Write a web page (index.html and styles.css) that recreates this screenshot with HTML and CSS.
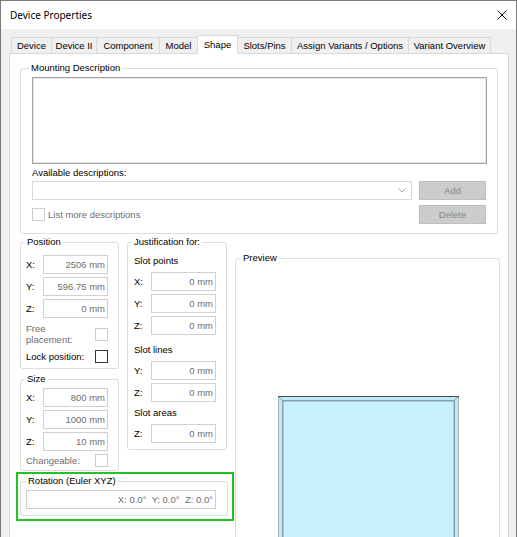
FILE: index.html
```html
<!DOCTYPE html>
<html>
<head>
<meta charset="utf-8">
<title>Device Properties</title>
<link rel="stylesheet" href="styles.css">
</head>
<body>
<div class="window">
  <div class="titlebar">
    <span class="title">Device Properties</span>
    <svg class="close" width="10" height="10" viewBox="0 0 10 10"><path d="M0.5 0.5 L9.5 9.5 M9.5 0.5 L0.5 9.5" stroke="#111" stroke-width="1" fill="none"/></svg>
  </div>
  <div class="client">
    <div class="tabs">
      <div class="tab">Device</div>
      <div class="tab">Device II</div>
      <div class="tab">Component</div>
      <div class="tab">Model</div>
      <div class="tab selected">Shape</div>
      <div class="tab">Slots/Pins</div>
      <div class="tab">Assign Variants / Options</div>
      <div class="tab">Variant Overview</div>
    </div>
    <div class="page">
      <div class="group mounting">
        <div class="group-title">Mounting Description</div>
        <div class="textarea"></div>
        <div class="field-label">Available descriptions:</div>
        <div class="desc-grid">
          <div class="combo"><svg width="8" height="5" viewBox="0 0 8 5"><path d="M0.5 0.5 L4 4 L7.5 0.5" stroke="#a6a6a6" fill="none"/></svg></div>
          <div class="button">Add</div>
          <div class="check-row"><span class="checkbox"></span><span class="muted">List more descriptions</span></div>
          <div class="button">Delete</div>
        </div>
      </div>

      <div class="lower">
        <div class="lower-left">
          <div class="cols">
            <div class="col">
              <div class="group position">
                <div class="group-title">Position</div>
                <div class="rows first">
                  <div class="field-row"><span>X:</span><span class="input">2506 mm</span></div>
                  <div class="field-row"><span>Y:</span><span class="input">596.75 mm</span></div>
                  <div class="field-row"><span>Z:</span><span class="input">0 mm</span></div>
                </div>
                <div class="check-line free"><span class="muted wrap-label">Free placement:</span><span class="checkbox"></span></div>
                <div class="check-line lock"><span>Lock position:</span><span class="checkbox enabled"></span></div>
              </div>
              <div class="group size">
                <div class="group-title">Size</div>
                <div class="rows">
                  <div class="field-row"><span>X:</span><span class="input">800 mm</span></div>
                  <div class="field-row"><span>Y:</span><span class="input">1000 mm</span></div>
                  <div class="field-row"><span>Z:</span><span class="input">10 mm</span></div>
                </div>
                <div class="check-line change"><span class="muted">Changeable:</span><span class="checkbox"></span></div>
              </div>
            </div>
            <div class="group justification">
              <div class="group-title">Justification for:</div>
              <div class="sub-head points">Slot points</div>
              <div class="rows">
                <div class="field-row"><span>X:</span><span class="input">0 mm</span></div>
                <div class="field-row"><span>Y:</span><span class="input">0 mm</span></div>
                <div class="field-row"><span>Z:</span><span class="input">0 mm</span></div>
              </div>
              <div class="sub-head lines">Slot lines</div>
              <div class="rows">
                <div class="field-row"><span>Y:</span><span class="input">0 mm</span></div>
                <div class="field-row"><span>Z:</span><span class="input">0 mm</span></div>
              </div>
              <div class="sub-head areas">Slot areas</div>
              <div class="rows">
                <div class="field-row"><span>Z:</span><span class="input">0 mm</span></div>
              </div>
            </div>
          </div>
          <div class="highlight">
            <div class="group rotation">
              <div class="group-title">Rotation (Euler XYZ)</div>
              <div class="input wide">X: 0.0°  Y: 0.0°  Z: 0.0°</div>
            </div>
          </div>
        </div>
        <div class="group preview">
          <div class="group-title">Preview</div>
          <svg class="drawing" width="181" height="145" viewBox="0 0 181 145">
            <rect x="0.5" y="0.5" width="180" height="170" fill="#bde8f5" stroke="#9fb4ba"/>
            <rect x="4.75" y="4.75" width="171.5" height="170" fill="#c8f1fe" stroke="#86a0a8" stroke-width="1.5"/>
            <line x1="0.5" y1="0.5" x2="4.75" y2="4.75" stroke="#86a0a8"/>
            <line x1="180.5" y1="0.5" x2="176.25" y2="4.75" stroke="#86a0a8"/>
            <line x1="0" y1="0.5" x2="181" y2="0.5" stroke="#4a4a4a"/>
          </svg>
        </div>
      </div>
    </div>
  </div>
</div>
</body>
</html>
```

FILE: styles.css
```css
* { box-sizing: border-box; }
html, body { margin: 0; padding: 0; overflow: hidden; }
body {
  font-family: "Liberation Sans", Arial, sans-serif;
  font-size: 9.5px;
  color: #000;
  background: #f0f0f0;
}
.window {
  width: 517px;
  height: 537px;
  border: 1px solid #7a7a7a;
  border-bottom: none;
  background: #f0f0f0;
  overflow: hidden;
}
.titlebar {
  height: 28px;
  background: #fff;
  display: flex;
  align-items: center;
  justify-content: space-between;
  padding: 0 9px 0 9px;
}
.title {
  font-family: "Noto Sans", "Liberation Sans", sans-serif;
  font-size: 10px;
  color: #000;
}
.close { display: block; }

.client { padding: 6px 7px 0 8px; }

.tabs {
  display: flex;
  align-items: flex-end;
  height: 18px;
  padding-left: 2px;
}
.tab {
  height: 16px;
  line-height: 15px;
  border: 1px solid #d9d9d9;
  border-bottom: none;
  background: #f0f0f0;
  text-align: center;
  margin-right: -1px;
  white-space: nowrap;
}
.tab:nth-child(1) { width: 41px; }
.tab:nth-child(2) { width: 46px; }
.tab:nth-child(3) { width: 64px; }
.tab:nth-child(4) { width: 39px; }
.tab:nth-child(5) { width: 41px; }
.tab:nth-child(6) { width: 55px; }
.tab:nth-child(7) { width: 118px; }
.tab:nth-child(8) { width: 83px; }
.tab.selected {
  height: 19px;
  line-height: 17px;
  background: #fff;
  margin-bottom: -1px;
  position: relative;
  z-index: 1;
}

.page {
  background: #fff;
  border: 1px solid #d9d9d9;
  border-bottom: none;
  height: 500px;
  padding: 14px 10px 0 10px;
}

.group {
  border: 1px solid #dcdcdc;
  border-radius: 3px;
  background: #fff;
}
.group-title {
  display: table;
  background: #fff;
  padding: 0 2px;
  line-height: 12px;
  margin-top: -7px;
  white-space: nowrap;
}

.mounting { padding: 0 10px 9px 11px; }
.mounting .group-title { margin-left: -3px; }
.textarea {
  margin-top: 3px;
  height: 87px;
  border: 1px solid #a3a3a3;
  box-shadow: inset 0 0 0 1px #e6e6e6;
  background: #fff;
}
.field-label {
  margin-top: 3px;
  line-height: 12px;
}
.desc-grid {
  display: grid;
  grid-template-columns: 380px 67px;
  grid-auto-rows: 19px;
  column-gap: 7px;
  row-gap: 5px;
  margin-top: 2px;
}
.combo {
  border: 1px solid #d9d9d9;
  background: #fff;
  display: flex;
  align-items: center;
  justify-content: flex-end;
  padding-right: 5px;
}
.combo svg { display: block; }
.button {
  border: 1px solid #bfbfbf;
  background: #cccccc;
  color: #888;
  text-align: center;
  line-height: 17px;
}
.check-row {
  display: flex;
  align-items: center;
  gap: 3px;
}
.checkbox {
  display: block;
  width: 13px;
  height: 13px;
  border: 1px solid #cccccc;
  background: #fff;
  flex: none;
}
.checkbox.enabled { border-color: #333; }
.muted { color: #6d6d6d; }

.lower {
  display: flex;
  gap: 8px;
  margin-top: 8px;
  margin-right: -2px;
}
.lower-left {
  width: 207px;
  display: flex;
  flex-direction: column;
  flex: none;
}
.cols {
  display: flex;
  gap: 8px;
  align-items: flex-start;
}
.col {
  width: 99px;
  display: flex;
  flex-direction: column;
  gap: 10px;
}

.rows {
  display: flex;
  flex-direction: column;
  gap: 3px;
  margin-top: 5px;
}
.field-row {
  display: grid;
  grid-template-columns: 17px 65px;
  align-items: center;
  height: 19px;
}
.input {
  display: block;
  height: 19px;
  border: 1px solid #d0d0d0;
  background: #fff;
  color: #6d6d6d;
  text-align: right;
  line-height: 17px;
  padding-right: 2px;
  white-space: pre;
}

.check-line {
  display: flex;
  align-items: center;
  justify-content: space-between;
  margin-top: 5px;
}
.wrap-label {
  width: 60px;
  line-height: 11px;
}
.check-line.lock { height: 13px; }

.position { padding: 0 10px 5px 5px; }
.position .group-title { margin-left: -1px; }
.position .rows.first { margin-top: 7px; }

.size { padding: 0 10px 3px 5px; }
.size .group-title { margin-left: -1px; }
.size .rows { margin-top: 3px; }
.size .check-line { margin-top: 3px; height: 13px; }

.justification {
  width: 100px;
  padding: 0 10px 6px 6px;
}
.justification .group-title { margin-left: -2px; }
.sub-head { line-height: 12px; }
.sub-head.points { margin-top: 7px; }
.sub-head.lines { margin-top: 9px; }
.sub-head.areas { margin-top: 5px; }

.highlight {
  margin: 1px 0 0 -4px;
  width: 218px;
  border: 2px solid #22c422;
  padding: 7px 4px 3px 2px;
}
.rotation {
  width: 208px;
  padding: 0 11px 6px 5px;
}
.input.wide {
  margin-top: 3px;
  width: 190px;
}

.preview {
  flex: 1;
  margin-top: 16px;
  height: 320px;
}
.preview .group-title { margin-left: 5px; }
.drawing {
  display: block;
  margin: 132px 0 0 42px;
}
```
